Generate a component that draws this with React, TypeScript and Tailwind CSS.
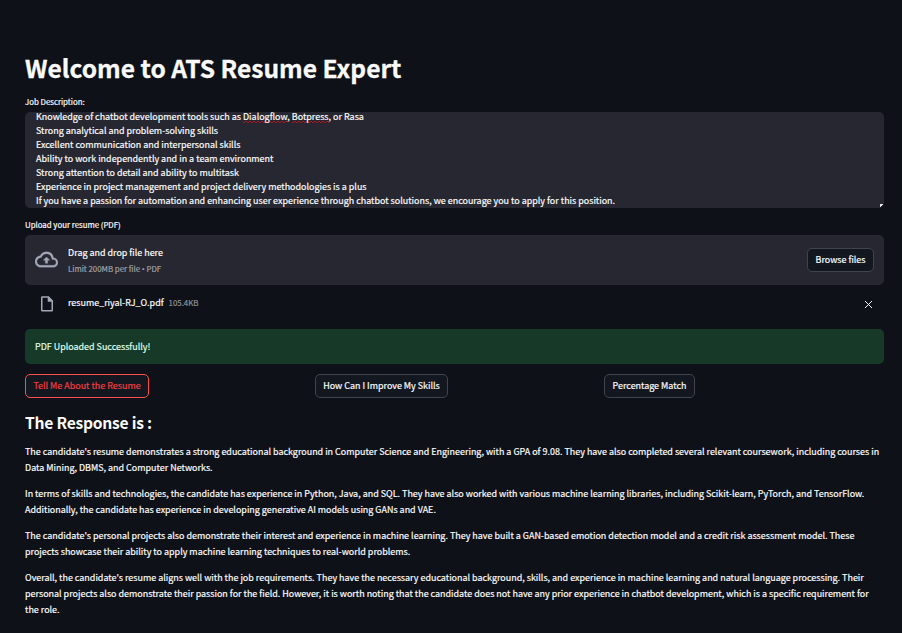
import React from "react";
import { X } from "lucide-react";

const misspelled =
  "bg-[repeating-conic-gradient(#a5161f_0_25%,transparent_0_50%)] bg-[length:4px_2px] bg-repeat-x bg-[position:0_100%]";

const description: React.ReactNode[] = [
  <>
    Knowledge of chatbot development tools such as <span className={misspelled}>Dialogflow</span>,{" "}
    <span className={misspelled}>Botpress</span>, or Rasa
  </>,
  "Strong analytical and problem-solving skills",
  "Excellent communication and interpersonal skills",
  "Ability to work independently and in a team environment",
  "Strong attention to detail and ability to multitask",
  "Experience in project management and project delivery methodologies is a plus",
  "If you have a passion for automation and enhancing user experience through chatbot solutions, we encourage you to apply for this position.",
];

const response = [
  [
    "The candidate's resume demonstrates a strong educational background in Computer Science and Engineering, with a GPA of 9.08. They have also completed several relevant coursework, including courses in",
    "Data Mining, DBMS, and Computer Networks.",
  ],
  [
    "In terms of skills and technologies, the candidate has experience in Python, Java, and SQL. They have also worked with various machine learning libraries, including Scikit-learn, PyTorch, and TensorFlow.",
    "Additionally, the candidate has experience in developing generative AI models using GANs and VAE.",
  ],
  [
    "The candidate's personal projects also demonstrate their interest and experience in machine learning. They have built a GAN-based emotion detection model and a credit risk assessment model. These",
    "projects showcase their ability to apply machine learning techniques to real-world problems.",
  ],
  [
    "Overall, the candidate's resume aligns well with the job requirements. They have the necessary educational background, skills, and experience in machine learning and natural language processing. Their",
    "personal projects also demonstrate their passion for the field. However, it is worth noting that the candidate does not have any prior experience in chatbot development, which is a specific requirement for",
    "the role.",
  ],
];

const button =
  "flex h-6 items-center justify-center rounded-[5px] border bg-[#131720] pb-px whitespace-nowrap";

export default function App() {
  return (
    <main className="h-[633px] w-[902px] overflow-hidden bg-[#0e1117] pl-[25px] pr-[18px] pt-[51px] font-['Noto_Sans_CJK_SC','Noto_Sans',sans-serif] text-[8.955px] leading-4 text-[#fafafa] [-webkit-text-stroke:0.2px]">
      <h1 className="h-[34px] whitespace-nowrap text-[24.55px] font-bold leading-[33px] [-webkit-text-stroke:0.3px]">
        Welcome to ATS Resume Expert
      </h1>

      <div className="mt-[10px] h-[14px] text-[7.83px] leading-[14px]">Job Description:</div>
      <div className="relative mt-[3px] h-24 overflow-hidden rounded-[5px] bg-[#262730] pl-[11px] tracking-[0.007px]">
        {description.map((line, i) => (
          <div
            key={i}
            className={
              i === 0
                ? "h-3 whitespace-nowrap leading-[10px]"
                : "h-[14px] whitespace-nowrap leading-[14px]"
            }
          >
            {line}
          </div>
        ))}
        <svg className="absolute bottom-0 right-0" width="5" height="5" viewBox="0 0 5 5">
          <path d="M1 1H4V2H3V3H2V4H1Z" fill="#e4e4e4" />
        </svg>
      </div>

      <div className="mt-[10px] h-[14px] text-[7.83px] leading-[14px]">Upload your resume (PDF)</div>
      <section className="mt-[3px] flex h-[50px] items-center rounded-[5px] bg-[#262730] px-[10px]">
        <svg
          width="23"
          height="24"
          viewBox="0 0.5 24 24"
          fill="#a3a8b8"
          stroke="#a3a8b8"
          strokeWidth="0.3"
          className="mr-[10px]"
        >
          <path d="M19.35 10.04A7.49 7.49 0 0 0 12 4C9.11 4 6.6 5.64 5.35 8.04A5.994 5.994 0 0 0 0 14c0 3.31 2.69 6 6 6h13c2.76 0 5-2.24 5-5 0-2.64-2.05-4.78-4.65-4.96zM19 18H6c-2.21 0-4-1.79-4-4 0-2.05 1.53-3.76 3.56-3.97l1.07-.11.5-.95A5.469 5.469 0 0 1 12 6c2.62 0 4.88 1.86 5.39 4.43l.3 1.5 1.53.11A2.98 2.98 0 0 1 22 15c0 1.65-1.35 3-3 3zM8.5 12.8h2.2v3.2h2.6v-3.2h2.2L12 9.3z" />
        </svg>
        <div className="flex flex-col pt-[2px]">
          <span className="leading-4">Drag and drop file here</span>
          <span className="text-[7.83px] leading-4 text-[#a0a0a6]">
            Limit 200MB per file <span className="font-['Open_Sans',sans-serif]">•</span> PDF
          </span>
        </div>
        <button className={`${button} ml-auto w-[67px] border-[#41444c]`}>Browse files</button>
      </section>

      <div className="flex h-[38px] items-center pl-4 pr-[9px]">
        <svg width="12" height="16" viewBox="0 0 12 16" className="mr-[15px]">
          <path
            fill="#a3a8b8"
            fillRule="evenodd"
            d="M1.2 0.3H7.8L12 4.5V14.3Q12 15.5 10.8 15.5H1.2Q0 15.5 0 14.3V1.5Q0 0.3 1.2 0.3ZM1.5 1.8V14H10.5V5.8H6.7V1.8Z"
          />
        </svg>
        <span className="pb-[2px]">resume_riyal-RJ_O.pdf</span>
        <span className="ml-[5px] pb-[2px] text-[7.83px] text-[#8f9197]">105.4KB</span>
        <X className="ml-auto" size={13} strokeWidth={1.8} />
      </div>

      <div className="mt-[6px] flex h-[35px] items-center rounded-[5px] bg-[#173928] px-[10px] text-[#dffde9]">
        PDF Uploaded Successfully!
      </div>

      <div className="mt-[10px] grid grid-cols-[290px_289px_1fr]">
        <button className={`${button} w-[124px] border-[#ff4b4b] text-[#f13b3e]`}>
          Tell Me About the Resume
        </button>
        <button className={`${button} w-[133px] border-[#41444c]`}>How Can I Improve My Skills</button>
        <button className={`${button} w-[91px] border-[#41444c]`}>Percentage Match</button>
      </div>

      <h2 className="mt-[14px] h-[22px] whitespace-nowrap text-[15.65px] font-bold leading-[22px] tracking-[-0.25px] [-webkit-text-stroke:0]">
        The Response is :
      </h2>

      <div className="mt-[10px] flex flex-col gap-[10px] tracking-[0.007px]">
        {response.map((lines, i) => (
          <p key={i}>
            {lines.map((line) => (
              <span key={line} className="block whitespace-nowrap">
                {line}
              </span>
            ))}
          </p>
        ))}
      </div>
    </main>
  );
}
